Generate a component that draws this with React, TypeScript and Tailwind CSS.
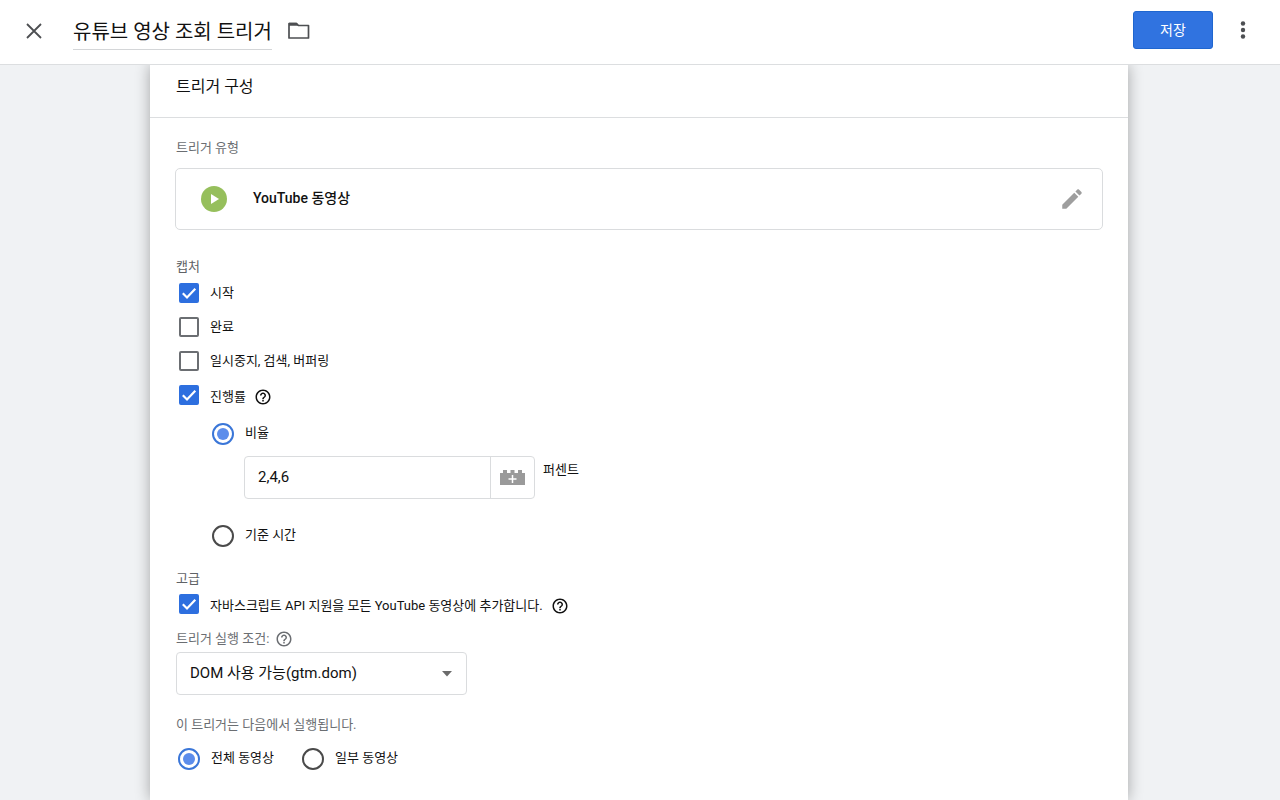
import { ReactNode, useState } from "react";

type ChoiceProps = {
  id: string;
  label: string;
  checked: boolean;
  onChange: () => void;
  name?: string;
  children?: ReactNode;
};

const HelpIcon = () => (
  <svg viewBox="0 0 24 24" className="size-[18px] fill-current" aria-hidden="true">
    <path d="M11 18h2v-2h-2v2zm1-16C6.48 2 2 6.48 2 12s4.480 10 10 10 10-4.480 10-10S17.520 2 12 2zm0 18c-4.410 0-8-3.590-8-8s3.590-8 8-8 8 3.590 8 8-3.590 8-8 8zm0-14c-2.210 0-4 1.790-4 4h2c0-1.100.9-2 2-2s2 .9 2 2c0 2-3 1.750-3 5h2c0-2.250 3-2.500 3-5 0-2.210-1.790-4-4-4z" />
  </svg>
);

const HelpButton = ({ label }: { label: string }) => (
  <button type="button" aria-label={label}>
    <HelpIcon />
  </button>
);

const Checkbox = ({ id, label, checked, onChange, children }: ChoiceProps) => (
  <div className="flex h-[34px] items-center pl-1">
    <span className="grid size-5 shrink-0 place-items-center">
      <input
        id={id}
        type="checkbox"
        checked={checked}
        onChange={onChange}
        className="col-start-1 row-start-1 size-5 appearance-none rounded-[2px] border-2 border-[#6b6e72] bg-white checked:border-[#2d6fdf] checked:bg-[#2d6fdf]"
      />
      {checked && (
        <svg
          viewBox="0 0 20 20"
          className="pointer-events-none col-start-1 row-start-1 size-5"
          aria-hidden="true"
        >
          <path d="M3.800 10.300 8 14.500 16.300 5.800" fill="none" stroke="#fff" strokeWidth="2.200" />
        </svg>
      )}
    </span>
    <div className={children ? "flex items-center gap-2 pt-1" : "flex items-center"}>
      <label htmlFor={id} className="pl-[11px] text-[13px] leading-5">
        {label}
      </label>
      {children}
    </div>
  </div>
);

const Radio = ({ id, name, label, checked, onChange }: ChoiceProps) => (
  <div className="flex h-11 items-center">
    <input
      id={id}
      name={name}
      type="radio"
      checked={checked}
      onChange={onChange}
      className="grid size-[22px] shrink-0 appearance-none place-items-center rounded-full border-2 border-[#4a4a4a] before:size-3 before:rounded-full checked:border-[#3a76d8] checked:before:bg-[#5c8deb]"
    />
    <label htmlFor={id} className="pb-[2px] pl-[11px] text-[13px] leading-5">
      {label}
    </label>
  </div>
);

const App = () => {
  const [title, setTitle] = useState("유튜브 영상 조회 트리거");
  const [percent, setPercent] = useState("2,4,6");
  const [progressType, setProgressType] = useState("percent");
  const [fireOn, setFireOn] = useState("all");
  const [capture, setCapture] = useState({
    start: true,
    complete: false,
    pause: false,
    progress: true,
    api: true,
  });

  const toggle = (key: keyof typeof capture) =>
    setCapture((prev) => ({ ...prev, [key]: !prev[key] }));

  return (
    <div className="flex h-screen flex-col bg-[#f0f2f4] font-['Roboto','Noto_Sans_CJK_KR',sans-serif] text-[#111]">
      <header className="flex h-[65px] shrink-0 items-center border-b border-[#dcdee0] bg-white pb-1 pl-[22px] pr-[25px]">
        <button type="button" aria-label="닫기" className="text-[#4d4f52]">
          <svg viewBox="0 0 24 24" className="size-6" aria-hidden="true">
            <path d="M5 6 19 20M19 6 5 20" fill="none" stroke="currentColor" strokeWidth="1.800" />
          </svg>
        </button>
        <input
          aria-label="트리거 이름"
          value={title}
          onChange={(e) => setTitle(e.currentTarget.value)}
          className="ml-[27px] mt-[2px] h-[38px] field-sizing-content border-b border-[#d4d6d8] text-[20px] outline-none"
        />
        <button type="button" aria-label="폴더" className="ml-[15px] text-[#4d4f52]">
          <svg viewBox="0 0 24 24" className="size-6" aria-hidden="true">
            <path
              d="M2 5.500h7.500l2 2H21.500v12.500H2z"
              fill="none"
              stroke="currentColor"
              strokeWidth="1.700"
              strokeLinejoin="round"
            />
            <path d="M2 4.700h7.600l2.300 3H2z" fill="currentColor" />
          </svg>
        </button>
        <button
          type="button"
          className="ml-auto h-[38px] w-20 rounded-[3px] border border-[#1f66cf] bg-[#3073e0] text-[14px] text-white"
        >
          저장
        </button>
        <button type="button" aria-label="더보기" className="ml-[18px] text-[#4d4f52]">
          <svg viewBox="0 0 24 24" className="size-6 fill-current" aria-hidden="true">
            <circle cx="12" cy="5.500" r="2.200" />
            <circle cx="12" cy="12" r="2.200" />
            <circle cx="12" cy="18.500" r="2.200" />
          </svg>
        </button>
      </header>

      <main className="flex-1 overflow-hidden pl-[150px] pr-[152px]">
        <section className="min-h-full bg-white shadow-[0_0_14px_rgba(0,0,0,0.32)]">
          <h2 className="border-b border-[#dcdee0] pb-5 pl-[26px] pt-3 text-[16px] leading-5">
            트리거 구성
          </h2>

          <div className="px-[25px] pt-[22px]">
            <h3 className="pl-px text-[13px] leading-4 text-[#6b6e72]">트리거 유형</h3>
            <div className="mt-3 flex h-[62px] items-center rounded-[5px] border border-[#dadcde] pl-[25px] pr-[17px]">
              <svg viewBox="0 0 26 26" className="size-[26px]" aria-hidden="true">
                <circle cx="13" cy="13" r="13" fill="#96bf5c" />
                <path d="M10 8v10l8-5z" fill="#fff" />
              </svg>
              <span className="pb-[3px] pl-[26px] text-[14px] font-medium leading-5">
                YouTube 동영상
              </span>
              <button type="button" aria-label="수정" className="ml-auto text-[#9e9e9e]">
                <svg viewBox="0 0 24 24" className="size-[26px] fill-current" aria-hidden="true">
                  <path d="M3 17.250V21h3.750L17.810 9.940l-3.750-3.750L3 17.250zM20.710 7.040c.39-.39.39-1.020 0-1.410l-2.340-2.340c-.39-.39-1.020-.39-1.410 0l-1.830 1.830 3.750 3.750 1.830-1.830z" />
                </svg>
              </button>
            </div>

            <h3 className="mt-[29px] pb-px pl-px text-[13px] leading-4 text-[#5f6266]">캡처</h3>
            <Checkbox
              id="start"
              label="시작"
              checked={capture.start}
              onChange={() => toggle("start")}
            />
            <Checkbox
              id="complete"
              label="완료"
              checked={capture.complete}
              onChange={() => toggle("complete")}
            />
            <Checkbox
              id="pause"
              label="일시중지, 검색, 버퍼링"
              checked={capture.pause}
              onChange={() => toggle("pause")}
            />
            <Checkbox
              id="progress"
              label="진행률"
              checked={capture.progress}
              onChange={() => toggle("progress")}
            >
              <HelpButton label="진행률 도움말" />
            </Checkbox>

            <div className="pl-[37px]">
              <Radio
                id="percent"
                name="progressType"
                label="비율"
                checked={progressType === "percent"}
                onChange={() => setProgressType("percent")}
              />
              <div className="flex items-start pl-8">
                <div className="flex h-[43px] w-[291px] rounded-[4px] border border-[#dadcde]">
                  <input
                    id="percentValue"
                    value={percent}
                    onChange={(e) => setPercent(e.currentTarget.value)}
                    className="min-w-0 flex-1 pl-[13px] text-[15px] outline-none"
                  />
                  <button
                    type="button"
                    aria-label="변수 추가"
                    className="flex w-11 items-center justify-center border-l border-[#dadcde]"
                  >
                    <svg viewBox="0 0 25 15" className="h-[15px] w-[25px]" aria-hidden="true">
                      <path
                        d="M0 3h3V0h4v3h3.500V0h4v3H18V0h4v3h3v12H0z"
                        fill="#9a9a9a"
                      />
                      <path d="M12.500 5v8M8.500 9h8" stroke="#fff" strokeWidth="1.500" />
                    </svg>
                  </button>
                </div>
                <label htmlFor="percentValue" className="pl-2 pt-1 text-[13px] leading-5">
                  퍼센트
                </label>
              </div>
              <div className="mt-[15px]">
                <Radio
                  id="time"
                  name="progressType"
                  label="기준 시간"
                  checked={progressType === "time"}
                  onChange={() => setProgressType("time")}
                />
              </div>
            </div>

            <h3 className="mt-[13px] pl-px text-[13px] leading-4 text-[#5f6266]">고급</h3>
            <Checkbox
              id="api"
              label="자바스크립트 API 지원을 모든 YouTube 동영상에 추가합니다."
              checked={capture.api}
              onChange={() => toggle("api")}
            >
              <HelpButton label="API 지원 도움말" />
            </Checkbox>

            <div className="mt-[10px] flex h-4 items-center gap-[6px] pl-px text-[#6b6e72]">
              <label htmlFor="event" className="text-[13px] leading-4">
                트리거 실행 조건:
              </label>
              <HelpButton label="실행 조건 도움말" />
            </div>
            <div className="ml-px mt-[5px] grid w-[291px] items-center">
              <select
                id="event"
                defaultValue="gtm.dom"
                className="col-start-1 row-start-1 h-[43px] appearance-none rounded-[4px] border border-[#dadcde] bg-white pl-[13px] text-[15px]"
              >
                <option value="gtm.dom">DOM 사용 가능(gtm.dom)</option>
              </select>
              <svg
                viewBox="0 0 12 6"
                className="pointer-events-none col-start-1 row-start-1 mr-[14px] h-[6px] w-3 justify-self-end"
                aria-hidden="true"
              >
                <path d="M1 0h10L6 5.500z" fill="#6b6b6b" />
              </svg>
            </div>

            <fieldset className="pt-[22px]">
              <legend className="float-left w-full pl-px text-[13px] leading-4 text-[#6b6e72]">
                이 트리거는 다음에서 실행됩니다.
              </legend>
              <div className="flex gap-7 pl-[3px] pt-1">
                <Radio
                  id="all"
                  name="fireOn"
                  label="전체 동영상"
                  checked={fireOn === "all"}
                  onChange={() => setFireOn("all")}
                />
                <Radio
                  id="some"
                  name="fireOn"
                  label="일부 동영상"
                  checked={fireOn === "some"}
                  onChange={() => setFireOn("some")}
                />
              </div>
            </fieldset>
          </div>
        </section>
      </main>
    </div>
  );
};

export default App;
